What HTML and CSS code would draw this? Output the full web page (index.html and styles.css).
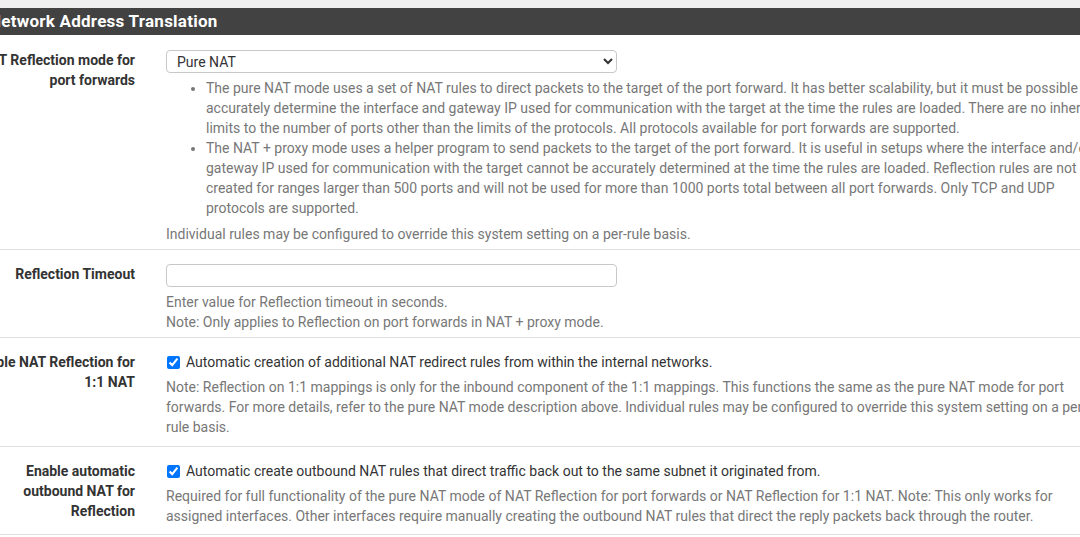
FILE: index.html
```html
<!DOCTYPE html>
<html lang="en">
<head>
  <meta charset="UTF-8">
  <meta name="viewport" content="width=device-width, initial-scale=1.0">
  <title>Firewall: Advanced - NAT</title>
  <link rel="stylesheet" href="styles.css">
</head>
<body>
  <div class="top-strip"></div>
  <div class="panel">
    <div class="panel-heading">
      <h2 class="panel-title">Network Address Translation</h2>
    </div>
    <div class="panel-body">

      <div class="form-group">
        <label class="control-label" for="natreflection">NAT Reflection mode for port forwards</label>
        <div class="control-col">
          <select id="natreflection" class="form-control">
            <option>Disable</option>
            <option>Enable (NAT + Proxy)</option>
            <option selected>Pure NAT</option>
          </select>
          <div class="help-block">
            <ul>
              <li>The pure NAT mode uses a set of NAT rules to direct packets to the target of the port forward. It has better scalability, but it must be possible to accurately determine the interface and gateway IP used for communication with the target at the time the rules are loaded. There are no inherent limits to the number of ports other than the limits of the protocols. All protocols available for port forwards are supported.</li>
              <li>The NAT + proxy mode uses a helper program to send packets to the target of the port forward. It is useful in setups where the interface and/or gateway IP used for communication with the target cannot be accurately determined at the time the rules are loaded. Reflection rules are not created for ranges larger than 500 ports and will not be used for more than 1000 ports total between all port forwards. Only TCP and UDP protocols are supported.</li>
            </ul>
            Individual rules may be configured to override this system setting on a per-rule basis.
          </div>
        </div>
      </div>

      <div class="form-group timeout-group">
        <label class="control-label" for="reflectiontimeout">Reflection Timeout</label>
        <div class="control-col">
          <input type="text" id="reflectiontimeout" class="form-control">
          <div class="help-block">
            Enter value for Reflection timeout in seconds.<br>
            Note: Only applies to Reflection on port forwards in NAT + proxy mode.
          </div>
        </div>
      </div>

      <div class="form-group check-group">
        <span class="control-label">Enable NAT Reflection for 1:1 NAT</span>
        <div class="control-col">
          <label class="chkbox"><input type="checkbox" checked> Automatic creation of additional NAT redirect rules from within the internal networks.</label>
          <div class="help-block">
            Note: Reflection on 1:1 mappings is only for the inbound component of the 1:1 mappings. This functions the same as the pure NAT mode for port forwards. For more details, refer to the pure NAT mode description above. Individual rules may be configured to override this system setting on a per-rule basis.
          </div>
        </div>
      </div>

      <div class="form-group check-group">
        <span class="control-label">Enable automatic outbound NAT for Reflection</span>
        <div class="control-col">
          <label class="chkbox"><input type="checkbox" checked> Automatic create outbound NAT rules that direct traffic back out to the same subnet it originated from.</label>
          <div class="help-block">
            Required for full functionality of the pure NAT mode of NAT Reflection for port forwards or NAT Reflection for 1:1 NAT. Note: This only works for assigned interfaces. Other interfaces require manually creating the outbound NAT rules that direct the reply packets back through the router.
          </div>
        </div>
      </div>

    </div>
  </div>
</body>
</html>
```

FILE: styles.css
```css
body {
  margin: 0;
  background: #fff;
  font-family: Roboto, 'Liberation Sans', Arial, sans-serif;
  font-size: 14px;
  line-height: 20px;
  color: #212121;
  overflow: hidden;
}
.top-strip {
  height: 8px;
  background: #efefef;
}
.panel {
  margin-left: -33px;
  width: 1138px;
}
.panel-heading {
  background: #424242;
  color: #fff;
  padding: 5px 22px;
  height: 27px;
  box-sizing: border-box;
}
.panel-title {
  margin: 0;
  font-size: 17px;
  font-weight: 700;
  line-height: 17px;
  letter-spacing: 0.25px;
}

.form-group {
  display: flex;
  padding: 15px 0 5px 0;
  border-bottom: 1px solid #e0e0e0;
}
.timeout-group {
  padding-top: 14px;
}
.check-group {
  padding: 14px 0 9px 0;
}
.check-group:last-child {
  padding-bottom: 8px;
}
.control-label {
  flex: 0 0 183px;
  box-sizing: border-box;
  padding-right: 15px;
  text-align: right;
  font-weight: 700;
  color: #333;
}
.control-col {
  flex: 0 0 939px;
  padding-left: 16px;
}

.form-control {
  display: block;
  width: 451px;
  height: 23px;
  box-sizing: border-box;
  border: 1px solid #c8c8c8;
  border-radius: 4px;
  background: #fff;
  font-family: inherit;
  font-size: 14px;
  color: #333;
  padding: 0 6px;
}
select.form-control {
  padding: 0 4px 0 6px;
}

.help-block {
  margin-top: 5px;
  color: #777;
}
.help-block ul {
  margin: 0 0 6px 0;
  padding-left: 40px;
}

.chkbox {
  display: flex;
  align-items: flex-start;
  gap: 6px;
  color: #333;
}
.chkbox input {
  margin: 4px 0 0 1px;
  width: 13px;
  height: 13px;
  flex: none;
}
```
